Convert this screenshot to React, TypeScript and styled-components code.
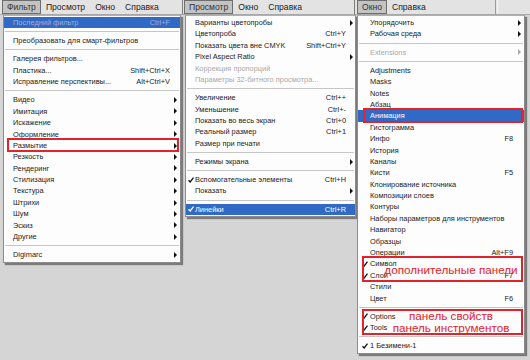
import React from "react";
import styled, { createGlobalStyle, css } from "styled-components";

const Global = createGlobalStyle`
  html, body { margin: 0; padding: 0; background: #d5d5d5; }
  body { font-family: "Liberation Sans", Arial, sans-serif; }
`;

type Row = {
  label: string;
  shortcut?: string;
  sub?: boolean;
  disabled?: boolean;
  checked?: boolean;
  hl?: boolean;
  mark?: boolean;
};
type Entry =
  | { kind: "sep" }
  | ({ kind: "item" } & Row)
  | { kind: "group"; notes: string[]; rows: Row[] };

const Page = styled.div`
  width: 530px;
  height: 360px;
  display: flex;
  align-items: flex-start;
  background: #d5d5d5;
  overflow: hidden;
`;

const Column = styled.div<{ $w: number }>`
  width: ${(p) => p.$w}px;
  flex: none;
  display: flex;
  flex-direction: column;
`;

const MenuBar = styled.div<{ $pl: number; $edge?: boolean }>`
  height: 15px;
  box-sizing: border-box;
  display: flex;
  align-items: stretch;
  background: #e3e3e3;
  border-bottom: 1px solid #a8a8a8;
  padding-left: ${(p) => p.$pl}px;
  ${(p) =>
    p.$edge &&
    css`
      border-right: 1px solid #7c7c7c;
    `}
`;

const BarItem = styled.div<{ $active?: boolean }>`
  box-sizing: border-box;
  padding: 0 5px;
  font-size: 8.6px;
  line-height: 14px;
  color: #1c1c1c;
  white-space: nowrap;
  ${(p) =>
    p.$active &&
    css`
      background: #c3c3c3;
      border: 1px solid #6e6e6e;
      padding: 0 4px;
      line-height: 12px;
      color: #333;
    `}
`;

const BarDivider = styled.div<{ $ml: number }>`
  margin-left: ${(p) => p.$ml}px;
  width: 1px;
  border-left: 1px solid #9a9a9a;
  border-right: 1px solid #f4f4f4;
`;

const Menu = styled.div<{ $ml: number; $w: number }>`
  margin-left: ${(p) => p.$ml}px;
  width: ${(p) => p.$w}px;
  box-sizing: border-box;
  background: #fdfdfd;
  border: 1px solid #8c8c8c;
  border-top-color: #b0b0b0;
  box-shadow: 2px 2px 1px rgba(0, 0, 0, 0.42);
  padding: 1px 0;
`;

const Item = styled.div<{
  $cw: number;
  $aw: number;
  $hl?: boolean;
  $disabled?: boolean;
  $mark?: boolean;
}>`
  position: relative;
  display: grid;
  grid-template-columns: ${(p) => p.$cw}px 1fr auto ${(p) => p.$aw}px;
  align-items: center;
  height: 11.4px;
  font-size: 7.4px;
  line-height: 11.4px;
  white-space: nowrap;
  color: ${(p) => (p.$disabled ? (p.$hl ? "#9fb1d8" : "#a9a9a9") : p.$hl ? "#ffffff" : "#222222")};
  background: ${(p) => (p.$hl ? "#3169c6" : "transparent")};
  ${(p) =>
    p.$mark &&
    css`
      &::after {
        content: "";
        position: absolute;
        inset: -2px 1px -1px ${p.$cw > 10 ? 5 : 3}px;
        border: 2px solid #e2232b;
      }
    `}
`;

const CheckCell = styled.span<{ $off: number }>`
  display: flex;
  align-items: center;
  padding-left: ${(p) => p.$off}px;
`;

const Shortcut = styled.span`
  text-align: right;
`;

const ArrowCell = styled.span<{ $off: number }>`
  display: flex;
  align-items: center;
  padding-left: ${(p) => p.$off}px;
`;

const Arrow = styled.span<{ $dim?: boolean }>`
  width: 0;
  height: 0;
  border-top: 3px solid transparent;
  border-bottom: 3px solid transparent;
  border-left: 3px solid ${(p) => (p.$dim ? "#a9a9a9" : "#111")};
`;

const Separator = styled.div`
  height: 6.8px;
  display: flex;
  align-items: center;
  padding: 0 1px;
  &::before {
    content: "";
    flex: 1;
    height: 1px;
    background: #c6c6c6;
  }
`;

const Group = styled.div`
  position: relative;
  &::after {
    content: "";
    position: absolute;
    inset: -2px 1px -1px 4px;
    border: 2px solid #e2232b;
    pointer-events: none;
  }
`;

const Notes = styled.div`
  position: absolute;
  inset: 0 0 0 20px;
  display: flex;
  flex-direction: column;
  justify-content: center;
  align-items: center;
`;

const Note = styled.div`
  font-size: 11.7px;
  line-height: 12px;
  color: #e6212a;
  white-space: nowrap;
`;

const CheckMark = ({ light }: { light?: boolean }) => (
  <svg width="6" height="6" viewBox="0 0 6 6">
    <path
      d="M0.5 3.2 L2.2 5 L5.5 0.6"
      fill="none"
      stroke={light ? "#fff" : "#111"}
      strokeWidth="1.3"
    />
  </svg>
);

type MenuSpec = {
  colW: number;
  barPl: number;
  edge?: boolean;
  bar: { label: string; active?: boolean }[];
  divider?: number;
  ml: number;
  w: number;
  cw: number;
  aw: number;
  checkOff: number;
  arrowOff: number;
  entries: Entry[];
};

const it = (label: string, extra: Partial<Row> = {}): Entry => ({
  kind: "item",
  label,
  ...extra,
});
const sep: Entry = { kind: "sep" };

const menus: MenuSpec[] = [
  {
    colW: 183,
    barPl: 2,
    edge: true,
    bar: [
      { label: "Фильтр", active: true },
      { label: "Просмотр" },
      { label: "Окно" },
      { label: "Справка" },
    ],
    ml: 3,
    w: 178,
    cw: 9,
    aw: 10,
    checkOff: 2,
    arrowOff: 4,
    entries: [
      it("Последний фильтр", { shortcut: "Ctrl+F", hl: true, disabled: true }),
      sep,
      it("Преобразовать для смарт-фильтров"),
      sep,
      it("Галерея фильтров..."),
      it("Пластика...", { shortcut: "Shift+Ctrl+X" }),
      it("Исправление перспективы...", { shortcut: "Alt+Ctrl+V" }),
      sep,
      it("Видео", { sub: true }),
      it("Имитация", { sub: true }),
      it("Искажение", { sub: true }),
      it("Оформление", { sub: true }),
      it("Размытие", { sub: true, mark: true }),
      it("Резкость", { sub: true }),
      it("Рендеринг", { sub: true }),
      it("Стилизация", { sub: true }),
      it("Текстура", { sub: true }),
      it("Штрихи", { sub: true }),
      it("Шум", { sub: true }),
      it("Эскиз", { sub: true }),
      it("Другие", { sub: true }),
      sep,
      it("Digimarc", { sub: true }),
    ],
  },
  {
    colW: 172,
    barPl: 1,
    edge: true,
    bar: [
      { label: "Просмотр", active: true },
      { label: "Окно" },
      { label: "Справка" },
    ],
    ml: 2,
    w: 171,
    cw: 9,
    aw: 9,
    checkOff: 2,
    arrowOff: 4,
    entries: [
      it("Варианты цветопробы", { sub: true }),
      it("Цветопроба", { shortcut: "Ctrl+Y" }),
      it("Показать цвета вне CMYK", { shortcut: "Shift+Ctrl+Y" }),
      it("Pixel Aspect Ratio", { sub: true }),
      it("Коррекция пропорций", { disabled: true }),
      it("Параметры 32-битного просмотра...", { disabled: true }),
      sep,
      it("Увеличение", { shortcut: "Ctrl++" }),
      it("Уменьшение", { shortcut: "Ctrl+-" }),
      it("Показать во весь экран", { shortcut: "Ctrl+0" }),
      it("Реальный размер", { shortcut: "Ctrl+1" }),
      it("Размер при печати"),
      sep,
      it("Режимы экрана", { sub: true }),
      sep,
      it("Вспомогательные элементы", { checked: true, shortcut: "Ctrl+H" }),
      it("Показать", { sub: true }),
      sep,
      it("Линейки", { checked: true, shortcut: "Ctrl+R", hl: true }),
    ],
  },
  {
    colW: 175,
    barPl: 2,
    bar: [{ label: "Окно", active: true }, { label: "Справка" }],
    divider: 64,
    ml: 2,
    w: 168,
    cw: 12,
    aw: 11,
    checkOff: 4,
    arrowOff: 5,
    entries: [
      it("Упорядочить", { sub: true }),
      it("Рабочая среда", { sub: true }),
      sep,
      it("Extensions", { sub: true, disabled: true }),
      sep,
      it("Adjustments"),
      it("Masks"),
      it("Notes"),
      it("Абзац"),
      it("Анимация", { hl: true, mark: true }),
      it("Гистограмма"),
      it("Инфо", { shortcut: "F8" }),
      it("История"),
      it("Каналы"),
      it("Кисти", { shortcut: "F5" }),
      it("Клонирование источника"),
      it("Композиции слоев"),
      it("Контуры"),
      it("Наборы параметров для инструментов"),
      it("Навигатор"),
      it("Образцы"),
      it("Операции", { shortcut: "Alt+F9" }),
      {
        kind: "group",
        notes: ["дополнительные панели"],
        rows: [
          { label: "Символ", checked: true },
          { label: "Слой", checked: true, shortcut: "F7" },
        ],
      },
      it("Стили"),
      it("Цвет", { shortcut: "F6" }),
      sep,
      {
        kind: "group",
        notes: ["панель свойств", "панель инструментов"],
        rows: [
          { label: "Options", checked: true },
          { label: "Tools", checked: true },
        ],
      },
      sep,
      it("1 Безимени-1", { checked: true }),
    ],
  },
];

const MenuRow = ({ r, m }: { r: Row; m: MenuSpec }) => (
  <Item $cw={m.cw} $aw={m.aw} $hl={r.hl} $disabled={r.disabled} $mark={r.mark}>
    <CheckCell $off={m.checkOff}>{r.checked && <CheckMark light={r.hl} />}</CheckCell>
    <span>{r.label}</span>
    <Shortcut>{r.shortcut ?? ""}</Shortcut>
    <ArrowCell $off={m.arrowOff}>{r.sub && <Arrow $dim={r.disabled} />}</ArrowCell>
  </Item>
);

const DropMenu = ({ m }: { m: MenuSpec }) => (
  <Column $w={m.colW}>
    <MenuBar $pl={m.barPl} $edge={m.edge}>
      {m.bar.map((b) => (
        <BarItem key={b.label} $active={b.active}>
          {b.label}
        </BarItem>
      ))}
      {m.divider !== undefined && <BarDivider $ml={m.divider} />}
    </MenuBar>
    <Menu $ml={m.ml} $w={m.w}>
      {m.entries.map((e, i) => {
        if (e.kind === "sep") return <Separator key={i} />;
        if (e.kind === "group")
          return (
            <Group key={i}>
              {e.rows.map((r) => (
                <MenuRow key={r.label} r={r} m={m} />
              ))}
              <Notes>
                {e.notes.map((n) => (
                  <Note key={n}>{n}</Note>
                ))}
              </Notes>
            </Group>
          );
        return <MenuRow key={i} r={e} m={m} />;
      })}
    </Menu>
  </Column>
);

export default function App() {
  return (
    <>
      <Global />
      <Page>
        {menus.map((m, i) => (
          <DropMenu key={i} m={m} />
        ))}
      </Page>
    </>
  );
}
